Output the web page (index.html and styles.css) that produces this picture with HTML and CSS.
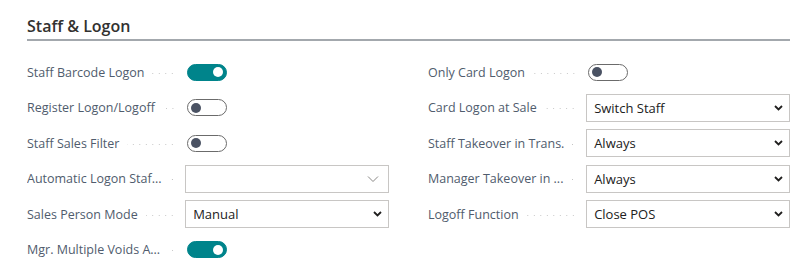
FILE: index.html
```html
<!DOCTYPE html>
<html lang="en">
<head>
    <meta charset="UTF-8">
    <title>Staff &amp; Logon</title>
    <link rel="stylesheet" href="styles.css">
</head>
<body>
    <div class="group">
        <h2 class="group-title">Staff &amp; Logon</h2>
        <div class="columns">
            <div class="column">
                <div class="field">
                    <span class="caption">Staff Barcode Logon</span>
                    <span class="toggle on"><span class="knob"></span></span>
                </div>
                <div class="field">
                    <span class="caption">Register Logon/Logoff</span>
                    <span class="toggle"><span class="knob"></span></span>
                </div>
                <div class="field">
                    <span class="caption">Staff Sales Filter</span>
                    <span class="toggle"><span class="knob"></span></span>
                </div>
                <div class="field">
                    <span class="caption">Automatic Logon Staf...</span>
                    <div class="select empty">
                        <span class="value"></span>
                        <svg class="chevron-thin" width="12" height="8" viewBox="0 0 12 8"><path d="M1 1.5 L6 6.5 L11 1.5" fill="none" stroke="#8a8886" stroke-width="1"/></svg>
                    </div>
                </div>
                <div class="field">
                    <span class="caption">Sales Person Mode</span>
                    <div class="select">
                        <span class="value">Manual</span>
                        <svg class="chevron" width="9" height="6" viewBox="0 0 9 6"><path d="M1 1 L4.5 4.5 L8 1" fill="none" stroke="#201f1e" stroke-width="1.8"/></svg>
                    </div>
                </div>
                <div class="field">
                    <span class="caption">Mgr. Multiple Voids A...</span>
                    <span class="toggle on"><span class="knob"></span></span>
                </div>
            </div>
            <div class="column">
                <div class="field">
                    <span class="caption">Only Card Logon</span>
                    <span class="toggle"><span class="knob"></span></span>
                </div>
                <div class="field">
                    <span class="caption">Card Logon at Sale</span>
                    <div class="select">
                        <span class="value">Switch Staff</span>
                        <svg class="chevron" width="9" height="6" viewBox="0 0 9 6"><path d="M1 1 L4.5 4.5 L8 1" fill="none" stroke="#201f1e" stroke-width="1.8"/></svg>
                    </div>
                </div>
                <div class="field">
                    <span class="caption">Staff Takeover in Trans.</span>
                    <div class="select">
                        <span class="value">Always</span>
                        <svg class="chevron" width="9" height="6" viewBox="0 0 9 6"><path d="M1 1 L4.5 4.5 L8 1" fill="none" stroke="#201f1e" stroke-width="1.8"/></svg>
                    </div>
                </div>
                <div class="field">
                    <span class="caption">Manager Takeover in ...</span>
                    <div class="select">
                        <span class="value">Always</span>
                        <svg class="chevron" width="9" height="6" viewBox="0 0 9 6"><path d="M1 1 L4.5 4.5 L8 1" fill="none" stroke="#201f1e" stroke-width="1.8"/></svg>
                    </div>
                </div>
                <div class="field">
                    <span class="caption">Logoff Function</span>
                    <div class="select">
                        <span class="value">Close POS</span>
                        <svg class="chevron" width="9" height="6" viewBox="0 0 9 6"><path d="M1 1 L4.5 4.5 L8 1" fill="none" stroke="#201f1e" stroke-width="1.8"/></svg>
                    </div>
                </div>
            </div>
        </div>
    </div>
</body>
</html>
```
FILE: styles.css
```css
body {
    margin: 0;
    padding: 0;
    font-family: "Open Sans", "Noto Sans", sans-serif;
    background-color: #fff;
    color: #212121;
}
.group {
    padding: 16px 10px 0 27px;
}
.group-title {
    margin: 0;
    font-size: 16px;
    font-weight: 600;
    color: #323130;
    line-height: 21px;
    padding-bottom: 2px;
    border-bottom: 2px solid #a3a8ad;
}
.columns {
    display: grid;
    grid-template-columns: 362px 362px;
    column-gap: 39px;
    padding-top: 17px;
}
.column {
    display: flex;
    flex-direction: column;
    gap: 7.6px;
}
.field {
    display: flex;
    align-items: center;
    height: 28px;
}
/* caption with dotted leader up to the control */
.caption {
    width: 149px;
    margin-right: 10px;
    display: flex;
    align-items: center;
    font-size: 12.5px;
    color: #505c6d;
    white-space: nowrap;
    overflow: hidden;
}
.caption::after {
    content: "";
    flex: 1;
    height: 3px;
    margin-left: 8px;
    margin-top: 2px;
    background-image: radial-gradient(circle, #c4c4c4 0.6px, transparent 0.9px);
    background-size: 6.5px 3px;
    background-position: right center;
    background-repeat: repeat-x;
}
.toggle {
    box-sizing: border-box;
    width: 40px;
    height: 17px;
    margin-left: 1px;
    border: 1px solid #6b6b6b;
    border-radius: 9px;
    position: relative;
    background: #fff;
}
.toggle .knob {
    position: absolute;
    top: 2.5px;
    left: 3px;
    width: 10px;
    height: 10px;
    border-radius: 50%;
    background: #4a5263;
}
.toggle.on {
    background: #00848b;
    border-color: #00848b;
}
.toggle.on .knob {
    left: auto;
    right: 3px;
    background: #fff;
}
.select {
    box-sizing: border-box;
    width: 205px;
    height: 28px;
    border: 1px solid #c8c6c4;
    display: flex;
    align-items: center;
    justify-content: space-between;
    padding: 0 6px 0 7px;
    font-size: 13px;
    color: #212121;
}
.select .chevron-thin {
    margin-right: 3px;
}
```
